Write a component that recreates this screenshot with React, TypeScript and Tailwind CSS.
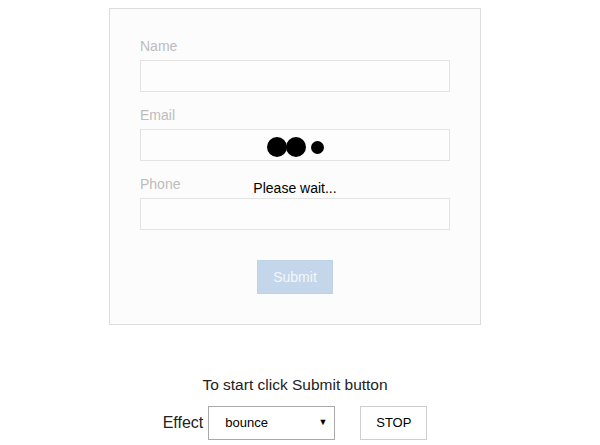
import React from "react";

function Field({ label }: { label: string }) {
  return (
    <div className="mb-[13px]">
      <div className="mb-1 text-[14px] leading-[20px] text-[#bdbdbd]">{label}</div>
      <div className="h-[32px] w-[310px] border border-[#e3e3e3] bg-[#fdfdfd]" />
    </div>
  );
}

export default function App() {
  return (
    <div className="min-h-[445px] w-full bg-white font-['Liberation_Sans',Arial,sans-serif]">
      <div className="w-[590px]">
        <div className="relative mx-auto mt-2 w-[372px] border border-[#dcdcdc] bg-[#fcfcfc] px-[30px] pb-[30px] pt-[27px]">
          <Field label="Name" />
          <Field label="Email" />
          <Field label="Phone" />
          <div className="mt-[30px] flex justify-center">
            <button className="h-[34px] w-[76px] border border-[#bfd2e6] bg-[#c4d7ea] text-[14px] text-[#f3f6fa]">
              Submit
            </button>
          </div>

          {/* loading overlay */}
          <div className="absolute left-0 right-0 top-[128px] flex flex-col items-center">
            <div className="flex items-center">
              <span className="h-[20px] w-[20px] rounded-full bg-black" />
              <span className="-ml-[1px] h-[20px] w-[20px] rounded-full bg-black" />
              <span className="ml-[5px] h-[13px] w-[13px] rounded-full bg-black" />
            </div>
            <div className="mt-[23px] text-[14px] leading-[16px] text-black">Please wait...</div>
          </div>
        </div>

        <div className="mt-[50px] text-center text-[15.5px] leading-[20px] text-[#222]">
          To start click Submit button
        </div>
        <div className="mt-[11px] flex items-center justify-center">
          <span className="mr-[5px] text-[16px] text-[#222]">Effect</span>
          <div className="flex h-[34px] w-[127px] items-center justify-between border border-[#a9a9a9] bg-white pl-[16px] pr-[7px] text-[13px] text-black">
            <span>bounce</span>
            <span className="text-[9px]">▼</span>
          </div>
          <button className="ml-[25px] h-[34px] w-[67px] border border-[#cfcfcf] bg-white text-[13px] text-black">
            STOP
          </button>
        </div>
      </div>
    </div>
  );
}
